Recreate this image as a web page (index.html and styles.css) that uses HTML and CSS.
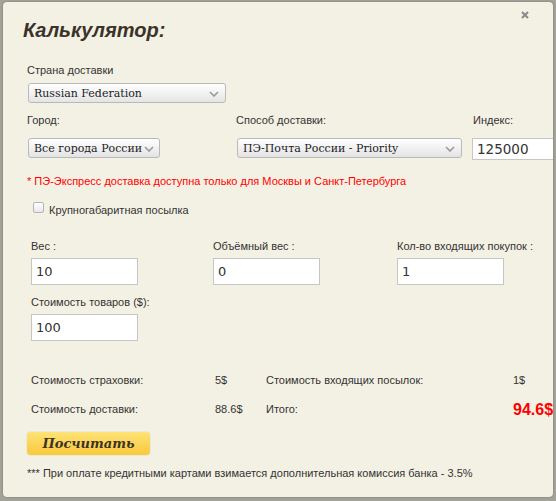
FILE: index.html
```html
<!DOCTYPE html>
<html lang="ru">
<head>
<meta charset="utf-8">
<title>Калькулятор</title>
<link rel="stylesheet" href="styles.css">
</head>
<body>
<div class="dialog">
  <a class="close" href="#" aria-label="Закрыть"><svg width="8" height="8" viewBox="0 0 8 8"><path d="M1 1L7 7M7 1L1 7" stroke="#8a8a8a" stroke-width="2" fill="none"/></svg></a>
  <h1 class="title">Калькулятор:</h1>

  <div class="form">
    <div class="label">Страна доставки</div>
    <div class="select sel-country"><span class="sel-text">Russian Federation</span><svg class="chev" width="10" height="6" viewBox="0 0 10 6"><path d="M1 1L5 5L9 1" stroke="#9a9a9a" stroke-width="1.6" fill="none"/></svg></div>

    <div class="row3">
      <div class="col">
        <div class="label">Город:</div>
        <div class="select sel-city"><span class="sel-text">Все города России</span><svg class="chev" width="10" height="6" viewBox="0 0 10 6"><path d="M1 1L5 5L9 1" stroke="#9a9a9a" stroke-width="1.6" fill="none"/></svg></div>
      </div>
      <div class="col col-method">
        <div class="label">Способ доставки:</div>
        <div class="select sel-method"><span class="sel-text">ПЭ-Почта России - Priority</span><svg class="chev" width="10" height="6" viewBox="0 0 10 6"><path d="M1 1L5 5L9 1" stroke="#9a9a9a" stroke-width="1.6" fill="none"/></svg></div>
      </div>
      <div class="col col-index">
        <div class="label">Индекс:</div>
        <div class="input input-index">125000</div>
      </div>
    </div>

    <div class="note-red">* ПЭ-Экспресс доставка доступна только для Москвы и Санкт-Петербурга</div>

    <div class="check-row"><span class="checkbox"></span><span class="check-label">Крупногабаритная посылка</span></div>

    <div class="weights">
      <div class="field">
        <div class="label">Вес :</div>
        <div class="input">10</div>
      </div>
      <div class="field">
        <div class="label">Объёмный вес :</div>
        <div class="input">0</div>
      </div>
      <div class="field">
        <div class="label">Кол-во входящих покупок :</div>
        <div class="input">1</div>
      </div>
      <div class="field">
        <div class="label">Стоимость товаров ($):</div>
        <div class="input">100</div>
      </div>
    </div>

    <div class="summary">
      <span>Стоимость страховки:</span><span>5$</span><span>Стоимость входящих посылок:</span><span>1$</span>
      <span>Стоимость доставки:</span><span>88.6$</span><span>Итого:</span><span class="total">94.6$</span>
    </div>

    <button class="calc" type="button">Посчитать</button>

    <div class="footnote">*** При оплате кредитными картами взимается дополнительная комиссия банка - 3.5%</div>
  </div>
</div>
</body>
</html>
```

FILE: styles.css
```css
html, body {
  margin: 0;
  padding: 0;
}
body {
  background: #a3a39a;
  width: 556px;
  height: 501px;
  overflow: hidden;
  font-family: "Liberation Sans", Arial, sans-serif;
  font-size: 11px;
  color: #333;
}
.dialog {
  position: relative;
  margin: 2px 0 0 3px;
  width: 550px;
  height: 495px;
  background: #f3f1e4;
  border-radius: 4px;
  box-shadow: 0 0 2px rgba(60, 60, 50, 0.5);
  overflow: hidden;
  box-sizing: border-box;
  padding: 17px 0 0 20px;
}
.close {
  position: absolute;
  top: 9px;
  left: 518px;
  display: block;
  width: 8px;
  height: 8px;
}
.close svg { display: block; }
.title {
  margin: 0;
  font-family: "Liberation Sans", Arial, sans-serif;
  font-size: 20px;
  line-height: 23px;
  font-weight: bold;
  font-style: italic;
  color: #3b3329;
}
.form {
  padding-left: 4px;
  padding-top: 22px;
}
.label {
  line-height: 13px;
  white-space: nowrap;
}
.select {
  box-sizing: border-box;
  height: 20px;
  margin-top: 6px;
  margin-left: 1px;
  border: 1px solid #b9b9b9;
  border-radius: 3px;
  background: linear-gradient(#ffffff, #e4e4e4);
  display: flex;
  align-items: center;
  padding: 0 0 0 5px;
  font-family: "DejaVu Serif", serif;
  font-size: 11px;
  color: #222;
  position: relative;
}
.sel-text {
  white-space: nowrap;
  flex: none;
}
.chev {
  position: absolute;
  right: 6px;
  top: 7px;
}
.sel-country { width: 198px; }
.row3 {
  display: flex;
  margin-top: 11px;
}
.col { flex: none; }
.col .select { margin-top: 11px; }
.sel-city { width: 132px; }
.sel-city .chev { right: 5px; }
.col-method { margin-left: 76px; }
.sel-method { width: 225px; }
.col-index { margin-left: 10px; }
.col-index .label { margin-left: 1px; }
.input {
  box-sizing: border-box;
  background: #fff;
  border: 1px solid #c6c6c6;
  font-family: "DejaVu Sans", sans-serif;
  font-size: 13px;
  color: #333;
  display: flex;
  align-items: center;
  padding-left: 4px;
}
.input-index {
  width: 100px;
  height: 22px;
  margin-top: 11px;
  padding-left: 4px;
  font-size: 13.5px;
}
.note-red {
  color: #f00;
  margin-top: 15px;
  line-height: 13px;
  white-space: nowrap;
}
.check-row {
  display: flex;
  align-items: center;
  margin-top: 14px;
  padding-left: 6px;
  height: 12px;
}
.checkbox {
  box-sizing: border-box;
  width: 11px;
  height: 11px;
  border: 1px solid #b5b5b5;
  border-radius: 2px;
  background: linear-gradient(#ffffff, #e8e8e8);
  margin-top: -2px;
}
.check-label {
  margin-left: 5px;
  margin-top: 4px;
}
.weights {
  display: grid;
  grid-template-columns: 182px 184px auto;
  row-gap: 11px;
  margin-top: 26px;
  padding-left: 4px;
}
.field .input {
  width: 107px;
  height: 27px;
  margin-top: 5px;
  padding-left: 4px;
}
.summary {
  display: grid;
  grid-template-columns: 184px 51px 247px auto;
  row-gap: 16px;
  margin-top: 33px;
  padding-left: 4px;
  line-height: 13px;
}
.summary span { white-space: nowrap; }
.total {
  color: #f00;
  font-weight: bold;
  font-size: 16px;
  line-height: 13px;
}
.calc {
  display: block;
  margin: 16px 0 0 0;
  width: 123px;
  height: 23px;
  border: none;
  border-radius: 4px;
  background: linear-gradient(#fde276, #f9c93c);
  box-shadow: 0 0 1px rgba(150, 110, 0, 0.5);
  font-family: "DejaVu Serif", serif;
  font-weight: bold;
  font-style: italic;
  font-size: 13px;
  color: #3d3322;
  padding: 0;
}
.footnote {
  margin-top: 12px;
  line-height: 13px;
  white-space: nowrap;
}
```
